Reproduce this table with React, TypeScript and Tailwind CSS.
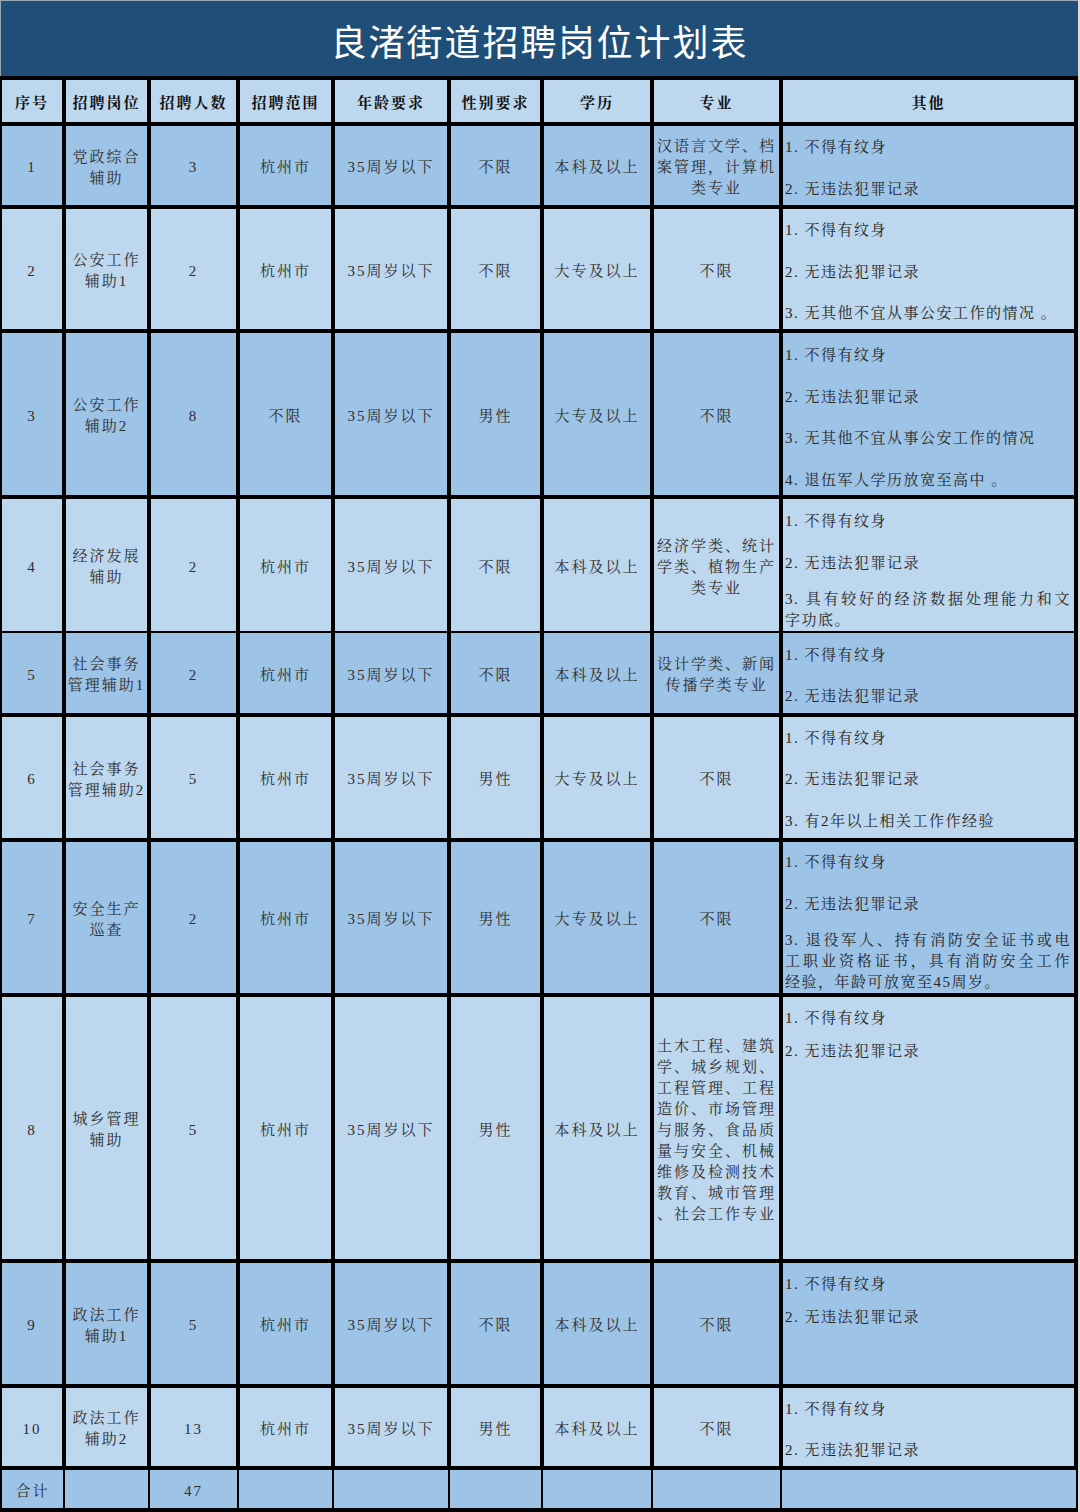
import React from "react";

const COLS =
  "grid grid-cols-[60px_81px_85px_91px_112px_89px_106px_125px_291px] gap-x-[4px]";
const TOTAL_COLS =
  "grid grid-cols-[61px_83px_87px_93px_114px_91px_108px_127px_294px] gap-x-[2px]";

const LIGHT = "bg-[#bdd7ee]";
const MID = "bg-[#9dc3e6]";

type Item = { lines: string[]; mt: string };
type Row = {
  h: string;
  bg: string;
  idx: string;
  pos: string[];
  n: string;
  scope: string;
  age: string;
  sex: string;
  edu: string;
  major: string[];
  pt: string;
  other: Item[];
};

const rows: Row[] = [
  {
    h: "h-[79px]",
    bg: MID,
    idx: "1",
    pos: ["党政综合", "辅助"],
    n: "3",
    scope: "杭州市",
    age: "35周岁以下",
    sex: "不限",
    edu: "本科及以上",
    major: ["汉语言文学、档", "案管理，计算机", "类专业"],
    pt: "pt-[11px]",
    other: [
      { lines: ["1. 不得有纹身"], mt: "mt-0" },
      { lines: ["2. 无违法犯罪记录"], mt: "mt-[21px]" },
    ],
  },
  {
    h: "h-[120px]",
    bg: LIGHT,
    idx: "2",
    pos: ["公安工作", "辅助1"],
    n: "2",
    scope: "杭州市",
    age: "35周岁以下",
    sex: "不限",
    edu: "大专及以上",
    major: ["不限"],
    pt: "pt-[11px]",
    other: [
      { lines: ["1. 不得有纹身"], mt: "mt-0" },
      { lines: ["2. 无违法犯罪记录"], mt: "mt-[21px]" },
      { lines: ["3. 无其他不宜从事公安工作的情况 。"], mt: "mt-[20px]" },
    ],
  },
  {
    h: "h-[162px]",
    bg: MID,
    idx: "3",
    pos: ["公安工作", "辅助2"],
    n: "8",
    scope: "不限",
    age: "35周岁以下",
    sex: "男性",
    edu: "大专及以上",
    major: ["不限"],
    pt: "pt-[12px]",
    other: [
      { lines: ["1. 不得有纹身"], mt: "mt-0" },
      { lines: ["2. 无违法犯罪记录"], mt: "mt-[21px]" },
      { lines: ["3. 无其他不宜从事公安工作的情况"], mt: "mt-[20px]" },
      { lines: ["4. 退伍军人学历放宽至高中 。"], mt: "mt-[21px]" },
    ],
  },
  {
    h: "h-[130px]",
    bg: LIGHT,
    idx: "4",
    pos: ["经济发展", "辅助"],
    n: "2",
    scope: "杭州市",
    age: "35周岁以下",
    sex: "不限",
    edu: "本科及以上",
    major: ["经济学类、统计", "学类、植物生产", "类专业"],
    pt: "pt-[12px]",
    other: [
      { lines: ["1. 不得有纹身"], mt: "mt-0" },
      { lines: ["2. 无违法犯罪记录"], mt: "mt-[21px]" },
      {
        lines: ["3. 具有较好的经济数据处理能力和文", "字功底。"],
        mt: "mt-[15px]",
      },
    ],
  },
  {
    h: "h-[80px]",
    bg: MID,
    idx: "5",
    pos: ["社会事务", "管理辅助1"],
    n: "2",
    scope: "杭州市",
    age: "35周岁以下",
    sex: "不限",
    edu: "本科及以上",
    major: ["设计学类、新闻", "传播学类专业"],
    pt: "pt-[12px]",
    other: [
      { lines: ["1. 不得有纹身"], mt: "mt-0" },
      { lines: ["2. 无违法犯罪记录"], mt: "mt-[20px]" },
    ],
  },
  {
    h: "h-[121px]",
    bg: LIGHT,
    idx: "6",
    pos: ["社会事务", "管理辅助2"],
    n: "5",
    scope: "杭州市",
    age: "35周岁以下",
    sex: "男性",
    edu: "大专及以上",
    major: ["不限"],
    pt: "pt-[11px]",
    other: [
      { lines: ["1. 不得有纹身"], mt: "mt-0" },
      { lines: ["2. 无违法犯罪记录"], mt: "mt-[20px]" },
      { lines: ["3. 有2年以上相关工作作经验"], mt: "mt-[21px]" },
    ],
  },
  {
    h: "h-[151px]",
    bg: MID,
    idx: "7",
    pos: ["安全生产", "巡查"],
    n: "2",
    scope: "杭州市",
    age: "35周岁以下",
    sex: "男性",
    edu: "大专及以上",
    major: ["不限"],
    pt: "pt-[10px]",
    other: [
      { lines: ["1. 不得有纹身"], mt: "mt-0" },
      { lines: ["2. 无违法犯罪记录"], mt: "mt-[21px]" },
      {
        lines: [
          "3. 退役军人、持有消防安全证书或电",
          "工职业资格证书，具有消防安全工作",
          "经验，年龄可放宽至45周岁。",
        ],
        mt: "mt-[15px]",
      },
    ],
  },
  {
    h: "h-[262px]",
    bg: LIGHT,
    idx: "8",
    pos: ["城乡管理", "辅助"],
    n: "5",
    scope: "杭州市",
    age: "35周岁以下",
    sex: "男性",
    edu: "本科及以上",
    major: [
      "土木工程、建筑",
      "学、城乡规划、",
      "工程管理、工程",
      "造价、市场管理",
      "与服务、食品质",
      "量与安全、机械",
      "维修及检测技术",
      "教育、城市管理",
      "、社会工作专业",
    ],
    pt: "pt-[11px]",
    other: [
      { lines: ["1. 不得有纹身"], mt: "mt-0" },
      { lines: ["2. 无违法犯罪记录"], mt: "mt-[12px]" },
    ],
  },
  {
    h: "h-[121px]",
    bg: MID,
    idx: "9",
    pos: ["政法工作", "辅助1"],
    n: "5",
    scope: "杭州市",
    age: "35周岁以下",
    sex: "不限",
    edu: "本科及以上",
    major: ["不限"],
    pt: "pt-[11px]",
    other: [
      { lines: ["1. 不得有纹身"], mt: "mt-0" },
      { lines: ["2. 无违法犯罪记录"], mt: "mt-[12px]" },
    ],
  },
  {
    h: "h-[78px]",
    bg: LIGHT,
    idx: "10",
    pos: ["政法工作", "辅助2"],
    n: "13",
    scope: "杭州市",
    age: "35周岁以下",
    sex: "男性",
    edu: "本科及以上",
    major: ["不限"],
    pt: "pt-[11px]",
    other: [
      { lines: ["1. 不得有纹身"], mt: "mt-0" },
      { lines: ["2. 无违法犯罪记录"], mt: "mt-[20px]" },
    ],
  },
];

const headers = [
  "序号",
  "招聘岗位",
  "招聘人数",
  "招聘范围",
  "年龄要求",
  "性别要求",
  "学历",
  "专业",
  "其他",
];

function Cell({
  bg,
  children,
}: {
  bg: string;
  children?: React.ReactNode;
}) {
  return (
    <div
      className={`${bg} flex flex-col items-center justify-center pt-[4px] text-center leading-[21px] tracking-[2px]`}
    >
      {children}
    </div>
  );
}

function Lines({ lines }: { lines: string[] }) {
  return (
    <>
      {lines.map((l, i) => (
        <div key={i} className="whitespace-nowrap">
          {l}
        </div>
      ))}
    </>
  );
}

export default function App() {
  return (
    <div className="w-[1080px] h-[1512px] bg-[#dcdcdc] font-['Liberation_Serif','Noto_Serif_CJK_SC','Noto_Sans_CJK_SC',serif] text-[15px] tracking-[1.5px] text-[#2e2e2e]">
      <div className="w-[1078px] bg-black flex flex-col">
        {/* Title */}
        <div className="h-[76px] bg-[#1f4e79] border-t border-l border-[#9aa7b4] flex items-center justify-center pt-[2px]">
          <h1 className="font-['Noto_Sans_CJK_SC',sans-serif] text-[36px] leading-none tracking-[2px] text-white font-normal">
            良渚街道招聘岗位计划表
          </h1>
        </div>

        <div className="flex flex-col gap-y-[4px] pt-[4px] pl-[2px] pr-[4px]">
          {/* Header */}
          <div className={`${COLS} h-[42px]`}>
            {headers.map((h) => (
              <div
                key={h}
                className={`${LIGHT} flex items-center justify-center pt-[4px] font-bold tracking-[2px] text-[#111]`}
              >
                {h}
              </div>
            ))}
          </div>

          {rows.map((r) => (
            <div key={r.idx} className={`${COLS} ${r.h}`}>
              <Cell bg={r.bg}>{r.idx}</Cell>
              <Cell bg={r.bg}>
                <Lines lines={r.pos} />
              </Cell>
              <Cell bg={r.bg}>{r.n}</Cell>
              <Cell bg={r.bg}>{r.scope}</Cell>
              <Cell bg={r.bg}>{r.age}</Cell>
              <Cell bg={r.bg}>{r.sex}</Cell>
              <Cell bg={r.bg}>{r.edu}</Cell>
              <Cell bg={r.bg}>
                <Lines lines={r.major} />
              </Cell>
              <div
                className={`${r.bg} ${r.pt} flex flex-col pl-[2px] pr-[3px] leading-[21px] text-[#262626]`}
              >
                {r.other.map((it, i) => (
                  <div key={i} className={`${it.mt} w-full`}>
                    {it.lines.map((l, j) => (
                      <div
                        key={j}
                        className={
                          j < it.lines.length - 1
                            ? "whitespace-nowrap text-justify [text-align-last:justify]"
                            : "whitespace-nowrap"
                        }
                      >
                        {l}
                      </div>
                    ))}
                  </div>
                ))}
              </div>
            </div>
          ))}
        </div>

        {/* Total row */}
        <div className="pt-[4px] pl-[2px] pb-[4px]">
          <div className={`${TOTAL_COLS} h-[38px]`}>
            <Cell bg={MID}>合计</Cell>
            <Cell bg={MID} />
            <Cell bg={MID}>47</Cell>
            <Cell bg={MID} />
            <Cell bg={MID} />
            <Cell bg={MID} />
            <Cell bg={MID} />
            <Cell bg={MID} />
            <Cell bg={MID} />
          </div>
        </div>
      </div>
    </div>
  );
}
